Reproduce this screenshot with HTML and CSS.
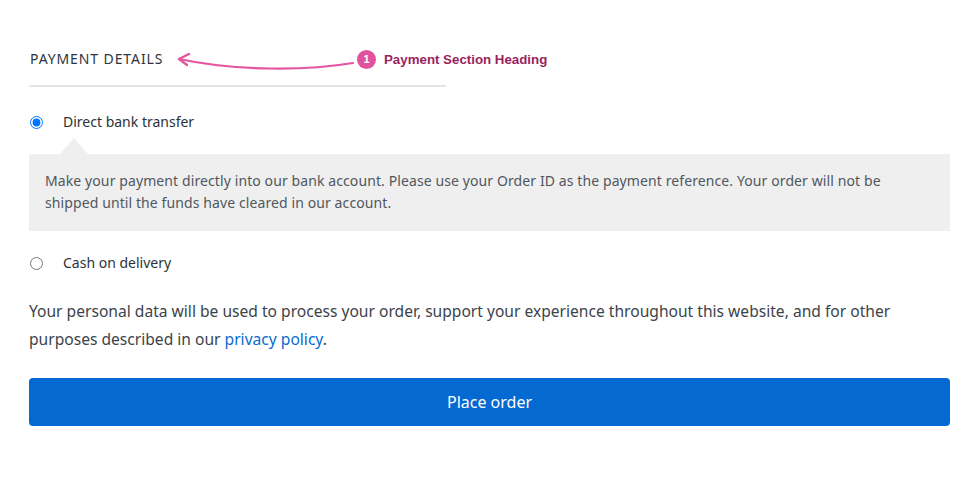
FILE: index.html
```html
<!DOCTYPE html>
<html>
<head>
<meta charset="utf-8">
<link rel="stylesheet" href="styles.css">
</head>
<body>
<div class="page">
  <div class="heading-row">
    <h3 class="heading">Payment details</h3>
    <div class="annot">
      <svg class="arrow" width="190" height="30" viewBox="0 0 190 30">
        <path d="M178 18 C 130 26, 60 26, 4 14" fill="none" stroke="#e4559f" stroke-width="2.2" stroke-linecap="round"/>
        <path d="M4 14 L 14 9 M4 14 L 12 20" fill="none" stroke="#e4559f" stroke-width="2.4" stroke-linecap="round"/>
      </svg>
      <span class="badge">1</span>
      <span class="annot-text">Payment Section Heading</span>
    </div>
  </div>
  <ul class="methods">
    <li class="method">
      <label class="method-label"><input type="radio" name="pm" checked> <span>Direct bank transfer</span></label>
      <div class="box">
        <p>Make your payment directly into our bank account. Please use your Order ID as the payment reference. Your order will not be shipped until the funds have cleared in our account.</p>
      </div>
    </li>
    <li class="method">
      <label class="method-label"><input type="radio" name="pm"> <span>Cash on delivery</span></label>
    </li>
  </ul>
  <p class="privacy">Your personal data will be used to process your order, support your experience throughout this website, and for other purposes described in our <a href="#">privacy policy</a>.</p>
  <button class="place">Place order</button>
</div>
</body>
</html>
```
FILE: styles.css
```css
* { box-sizing: border-box; }
body { margin: 0; background: #fff; font-family: "Noto Sans", "Open Sans", sans-serif; color: #2c3338; }
.page { padding: 47px 30px 0 29px; width: 980px; }
.heading-row { position: relative; width: 417px; border-bottom: 2px solid #e5e5e7; padding-bottom: 14px; }
.heading { margin: 0 0 0 1px; font-size: 14px; font-weight: 400; letter-spacing: 0.9px; text-transform: uppercase; color: #2f3540; line-height: 24px; }
.annot { position: absolute; left: 146px; top: 0; display: flex; align-items: center; height: 24px; }
.arrow { position: absolute; left: 0; top: -2px; }
.badge { margin-left: 182px; width: 19px; height: 19px; border-radius: 50%; background: #e0529c; color: #fff; font: 700 11px "Liberation Sans", Arial, sans-serif; display: flex; align-items: center; justify-content: center; }
.annot-text { margin-left: 8px; font: 700 13.3px "Liberation Sans", Arial, sans-serif; color: #9b1f5f; white-space: nowrap; }
.methods { list-style: none; margin: 0; padding: 0; }
.method-label { display: flex; align-items: center; font-size: 14px; color: #2c3338; line-height: 22px; }
.method:first-child .method-label { margin-top: 24px; }
.method-label input { margin: 0 20px 0 1px; width: 13px; height: 13px; }
.box { position: relative; margin-top: 21px; background: #efefef; padding: 16px 24px 17px 16px; }
.box::before { content: ""; position: absolute; left: 31px; top: -16px; border: 16px solid transparent; border-top: 0; border-bottom-color: #efefef; border-left-width: 14px; border-right-width: 14px; }
.box p { margin: 0; font-size: 14px; line-height: 22px; color: #50575e; letter-spacing: 0.1px; }
.method + .method .method-label { margin-top: 21px; }
.privacy { margin: 23px 0 0; font-size: 15.6px; line-height: 28px; color: #3c434a; }
.privacy a { color: #0a6bd0; text-decoration: none; }
.place { display: block; width: 921px; height: 48px; margin-top: 25px; border: 0; border-radius: 4px; background: #0469d1; color: #fff; font-family: inherit; font-size: 16px; }
```
